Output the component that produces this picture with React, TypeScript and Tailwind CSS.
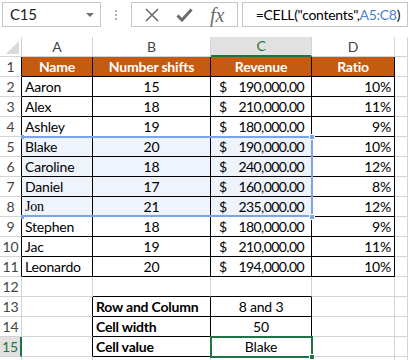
import React from "react";

const rows = [
  { n: "Aaron", s: "15", r: "190,000.00", p: "10%" },
  { n: "Alex", s: "18", r: "210,000.00", p: "11%" },
  { n: "Ashley", s: "19", r: "180,000.00", p: "9%" },
  { n: "Blake", s: "20", r: "190,000.00", p: "10%" },
  { n: "Caroline", s: "18", r: "240,000.00", p: "12%" },
  { n: "Daniel", s: "17", r: "160,000.00", p: "8%" },
  { n: "Jon", s: "21", r: "235,000.00", p: "12%" },
  { n: "Stephen", s: "18", r: "180,000.00", p: "9%" },
  { n: "Jac", s: "19", r: "210,000.00", p: "11%" },
  { n: "Leonardo", s: "20", r: "194,000.00", p: "10%" },
];

const info = [
  { label: "Row and Column", value: "8 and 3" },
  { label: "Cell width", value: "50" },
  { label: "Cell value", value: "Blake" },
];

const gray = "border-r border-b border-[#d4d4d4]";
const black = "border-r border-b border-black";

function RowHead({ num, active }: { num: number; active?: boolean }) {
  return (
    <div
      className={
        active
          ? "h-[20px] flex items-center justify-center bg-[#e1e1e1] text-[#217346] border-b border-[#d4d4d4] border-r-2 border-r-[#217346]"
          : num <= 11
          ? "h-[20px] flex items-center justify-center text-[#444] border-b border-[#d4d4d4] border-r border-r-black"
          : "h-[20px] flex items-center justify-center text-[#444] border-b border-[#d4d4d4] border-r border-r-[#d4d4d4]"
      }
    >
      {num}
    </div>
  );
}

export default function App() {
  return (
    <div
      className="w-[408px] h-[360px] overflow-hidden bg-white text-[14px] tracking-[-0.2px] leading-none text-black"
      style={{ fontFamily: "Lato, 'Open Sans', sans-serif" }}
    >
      {/* formula bar */}
      <div className="h-[37px] flex items-start pt-[2px] pl-[2px]">
        <div className="w-[101px] h-[25px] border border-[#c6c6c6] flex items-center justify-between pl-[7px] pr-[6px] text-[#222] text-[15px]">
          <span>C15</span>
          <span className="w-0 h-0 border-l-[4px] border-r-[4px] border-t-[4px] border-l-transparent border-r-transparent border-t-[#707070]"></span>
        </div>
        <div className="w-[31px] h-[25px] flex flex-col items-center justify-center gap-[2px]">
          <span className="w-[2px] h-[2px] bg-[#b0b0b0]"></span>
          <span className="w-[2px] h-[2px] bg-[#b0b0b0]"></span>
          <span className="w-[2px] h-[2px] bg-[#b0b0b0]"></span>
        </div>
        <div className="w-[109px] h-[25px] border border-[#c6c6c6] flex items-center justify-around px-[4px]">
          <svg width="14" height="14" viewBox="0 0 14 14">
            <path d="M1 1 L13 13 M13 1 L1 13" stroke="#6b6b6b" strokeWidth="1.6" fill="none" />
          </svg>
          <svg width="17" height="14" viewBox="0 0 17 14">
            <path d="M1.5 7.5 L6 12 L15.5 1.5" stroke="#6b6b6b" strokeWidth="3" fill="none" />
          </svg>
          <span
            className="italic text-[20px] text-[#6b6b6b]"
            style={{ fontFamily: "'Liberation Serif', serif" }}
          >
            fx
          </span>
        </div>
        <div className="ml-[4px] w-[170px] h-[25px] border border-[#c6c6c6] flex items-center pl-[13px] whitespace-nowrap text-[14px] tracking-[-0.3px]">
          =CELL("contents",<span className="text-[#4a7fd4]">A5:C8</span>)
        </div>
      </div>

      <div className="relative grid grid-cols-[22px_71px_118px_101px_83px_1fr]">
        {/* column headers */}
        <div className="h-[20px] border-r border-b border-[#d4d4d4]"></div>
        <div className={`${gray} h-[20px] flex items-center justify-center text-[#444]`}>A</div>
        <div className={`${gray} h-[20px] flex items-center justify-center text-[#444]`}>B</div>
        <div className="h-[20px] flex items-center justify-center bg-[#e1e1e1] text-[#217346] border-r border-[#d4d4d4] border-b-2 border-b-[#217346]">C</div>
        <div className={`${gray} h-[20px] flex items-center justify-center text-[#444]`}>D</div>
        <div className={`${gray} h-[20px]`}></div>

        {/* row 1 */}
        <RowHead num={1} />
        <div className={`${black} h-[20px] bg-[#c55a11] text-white font-bold flex items-center justify-center`}>Name</div>
        <div className={`${black} h-[20px] bg-[#c55a11] text-white font-bold flex items-center justify-center`}>Number shifts</div>
        <div className={`${black} h-[20px] bg-[#c55a11] text-white font-bold flex items-center justify-center`}>Revenue</div>
        <div className={`${black} h-[20px] bg-[#c55a11] text-white font-bold flex items-center justify-center`}>Ratio</div>
        <div className={`${gray} h-[20px]`}></div>

        {rows.map((r, i) => {
          const sel = i >= 3 && i <= 6;
          const fill = sel ? "bg-[#eef3fc]" : "bg-white";
          return (
            <React.Fragment key={r.n}>
              <RowHead num={i + 2} />
              <div className={`${black} ${fill} h-[20px] flex items-center pl-[3px]`}>
                {r.n === "Jon" ? (
                  <span className="font-serif" style={{ fontFamily: "'Liberation Serif', 'DejaVu Serif', serif" }}>
                    {r.n}
                  </span>
                ) : (
                  r.n
                )}
              </div>
              <div className={`${black} ${fill} h-[20px] flex items-center justify-center`}>{r.s}</div>
              <div className={`${black} ${fill} h-[20px] flex items-center justify-between pl-[8px] pr-[7px]`}>
                <span>$</span>
                <span className="tracking-[-0.6px]">{r.r}</span>
              </div>
              <div className={`${black} h-[20px] flex items-center justify-end pr-[3px]`}>{r.p}</div>
              <div className={`${gray} h-[20px]`}></div>
            </React.Fragment>
          );
        })}

        {/* row 12 */}
        <RowHead num={12} />
        <div className={`${gray} h-[20px]`}></div>
        <div className="h-[20px] border-r border-[#d4d4d4] border-b border-b-black"></div>
        <div className="h-[20px] border-r border-[#d4d4d4] border-b border-b-black"></div>
        <div className={`${gray} h-[20px]`}></div>
        <div className={`${gray} h-[20px]`}></div>

        {info.map((it, i) => (
          <React.Fragment key={it.label}>
            <RowHead num={13 + i} active={i === 2} />
            <div className="h-[20px] border-b border-[#d4d4d4] border-r border-r-black"></div>
            <div className={`${black} h-[20px] flex items-center pl-[3px] font-bold`}>{it.label}</div>
            <div className={`${black} h-[20px] flex items-center justify-center`}>{it.value}</div>
            <div className={`${gray} h-[20px]`}></div>
            <div className={`${gray} h-[20px]`}></div>
          </React.Fragment>
        ))}
        <div className={`${gray} h-[20px]`}></div>
        <div className={`${gray} h-[20px]`}></div>
        <div className={`${gray} h-[20px]`}></div>
        <div className={`${gray} h-[20px]`}></div>
        <div className={`${gray} h-[20px]`}></div>
        <div className={`${gray} h-[20px]`}></div>

        {/* corner triangle */}
        <div className="absolute left-[6px] top-[4px] w-0 h-0 border-l-[13px] border-b-[13px] border-l-transparent border-b-[#dadada]"></div>

        {/* reference highlight A5:C8 */}
        <div className="absolute left-[22px] top-[99px] w-[291px] h-[81px] border-t-2 border-r-2 border-b-2 border-[#7aa3e8]"></div>
        <div className="absolute left-[21px] top-[98px] w-[3px] h-[4px] bg-[#7aa3e8]"></div>
        <div className="absolute left-[21px] top-[178px] w-[3px] h-[4px] bg-[#7aa3e8]"></div>
        <div className="absolute left-[309px] top-[97px] w-[6px] h-[6px] bg-[#7aa3e8] border border-white"></div>
        <div className="absolute left-[309px] top-[177px] w-[6px] h-[6px] bg-[#7aa3e8] border border-white"></div>

        {/* active cell C15 */}
        <div className="absolute left-[210px] top-[299px] w-[103px] h-[22px] border-2 border-[#217346]"></div>
        <div className="absolute left-[309px] top-[317px] w-[6px] h-[6px] bg-[#217346] border border-white"></div>
      </div>
    </div>
  );
}
